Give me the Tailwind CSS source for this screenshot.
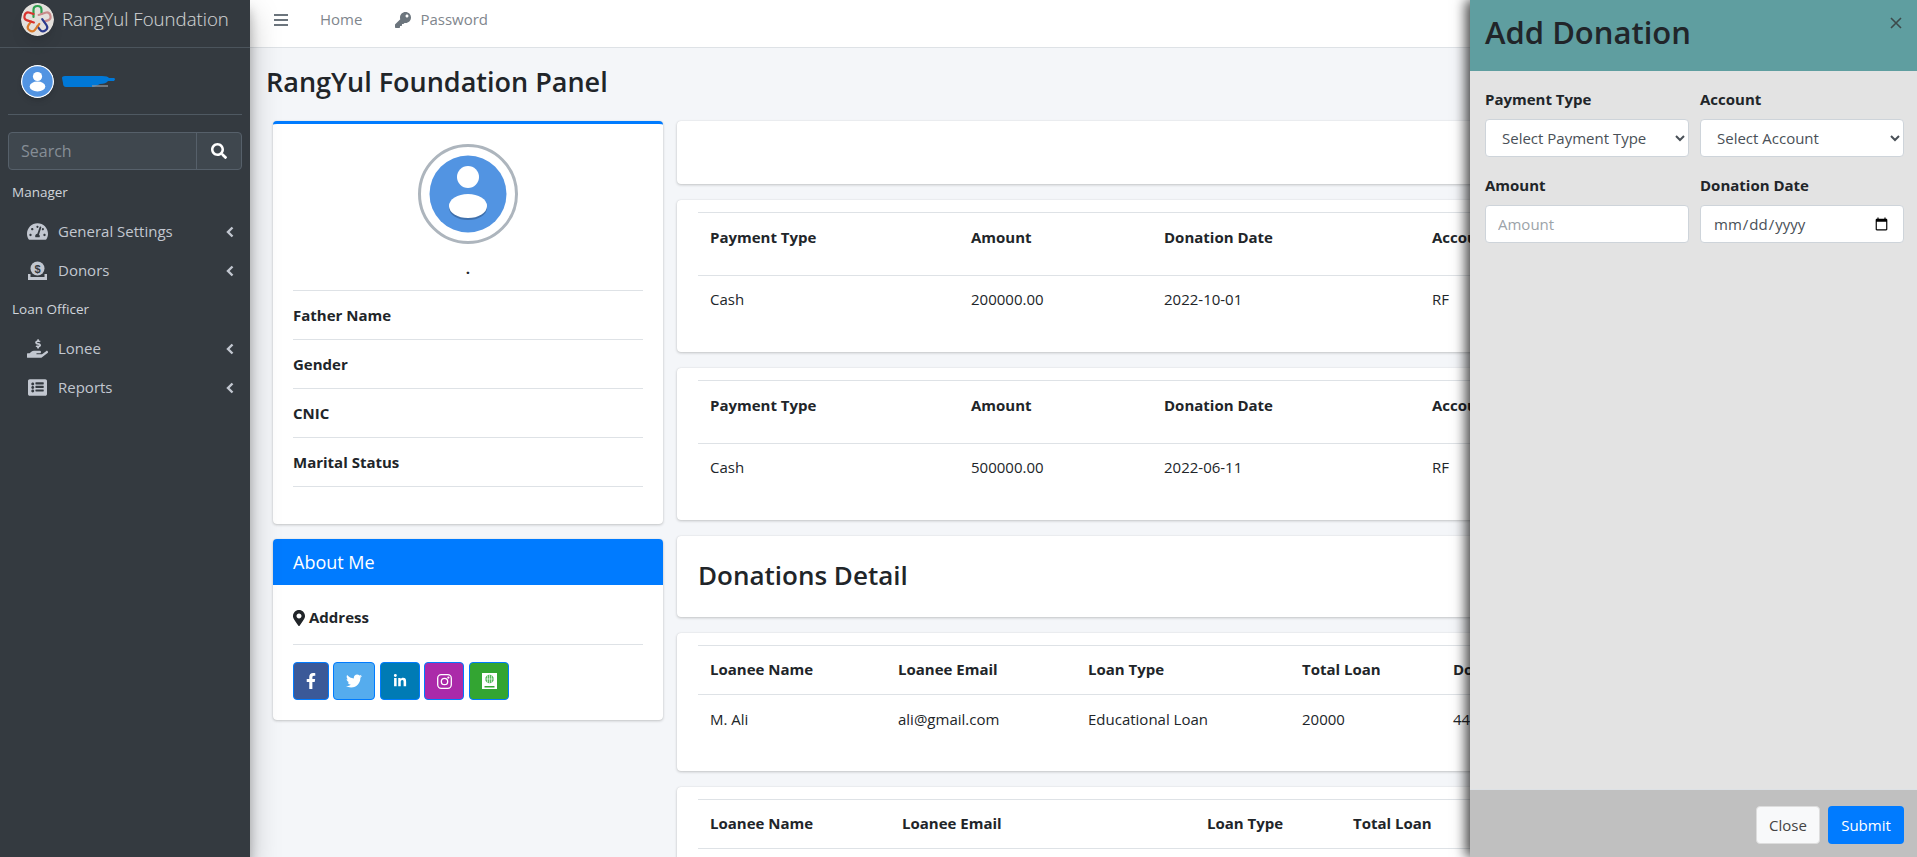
<!DOCTYPE html>
<html lang="en">
<head>
    <meta charset="UTF-8">
    <title>RangYul Foundation Panel</title>
    <script src="https://cdn.jsdelivr.net/npm/@tailwindcss/browser@4"></script>
</head>
<body class="h-screen overflow-hidden bg-[#f4f6f9] text-[#212529] font-['Open_Sans',sans-serif] text-[15px]">
<div class="flex h-full relative">

    <!-- Sidebar -->
    <aside class="w-[250px] h-full flex-shrink-0 bg-[#343a40] text-[#c2c7d0] relative z-10 shadow-[0_14px_28px_rgba(0,0,0,.25),0_10px_10px_rgba(0,0,0,.22)]">
        <div class="h-[48px] flex items-center border-b border-[#4b545c] pl-[21px]">
            <svg class="w-[33px] h-[33px] -mt-[9px] shadow-lg rounded-full" viewBox="0 0 33 33" fill="none" stroke-width="2.2" stroke-linecap="round">
                <circle cx="16.5" cy="16.5" r="16.5" fill="#e4e0dc"/>
                <path d="M12.5 14V7Q12.5 3 16.5 3T20.5 7V11" stroke="#2f9e4f"/>
                <path d="M12.5 14V7Q12.5 3 16.5 3T20.5 7V11" stroke="#c98a8a" transform="rotate(72 16.5 16.5)"/>
                <path d="M12.5 14V7Q12.5 3 16.5 3T20.5 7V11" stroke="#2b3a8c" transform="rotate(144 16.5 16.5)"/>
                <path d="M12.5 14V7Q12.5 3 16.5 3T20.5 7V11" stroke="#d97a2b" transform="rotate(216 16.5 16.5)"/>
                <path d="M12.5 14V7Q12.5 3 16.5 3T20.5 7V11" stroke="#d8332e" transform="rotate(288 16.5 16.5)"/>
            </svg>
            <span class="ml-[8px] -mt-[9px] text-[18.6px] font-light text-white/80 leading-none">RangYul Foundation</span>
        </div>
        <div class="h-[67px] mx-[8px] flex items-center pl-[13px] border-b border-[#4f5962] relative">
            <svg class="w-[33px] h-[33px] rounded-full shadow-md" viewBox="0 0 33 33">
                <circle cx="16.5" cy="16.5" r="16" fill="#5294e2" stroke="#fff" stroke-width="1.5"/>
                <circle cx="16.5" cy="11.5" r="4.6" fill="#fff"/>
                <ellipse cx="16.5" cy="21.5" rx="7.8" ry="5" fill="#fff"/>
            </svg>
            <svg class="ml-[8px] w-[54px] h-[13px]" viewBox="0 0 54 13">
                <path d="M0 3Q0 1 3 1H40Q46 1 47 3H52Q54 4 52 6H46Q44 9 38 9L32 12H4Q1 12 1 8Z" fill="#0078d7"/>
                <path d="M30 10H46V12H30Z" fill="#8a929a" opacity=".7"/>
            </svg>
        </div>
        <div class="mx-[8px] mt-[17px] h-[38px] flex rounded-[4px] border border-[#56606a] bg-[#3f474e]">
            <div class="flex-1 flex items-center pl-[12px] text-[16px] text-[#868e96]">Search</div>
            <div class="w-[45px] flex items-center justify-center border-l border-[#56606a]">
                <svg class="w-[16px] h-[16px]" viewBox="0 0 512 512" fill="#fff"><path d="M505 442.7L405.3 343c-4.5-4.5-10.6-7-17-7H372c27.6-35.3 44-79.7 44-128C416 93.1 322.9 0 208 0S0 93.1 0 208s93.1 208 208 208c48.3 0 92.7-16.4 128-44v16.3c0 6.4 2.5 12.5 7 17l99.7 99.7c9.4 9.4 24.6 9.4 33.9 0l28.3-28.3c9.4-9.4 9.4-24.6.1-34zM208 336c-70.7 0-128-57.2-128-128 0-70.7 57.2-128 128-128 70.7 0 128 57.2 128 128 0 70.7-57.2 128-128 128z"/></svg>
            </div>
        </div>
        <div class="pl-[12px] mt-[12px] h-[20px] leading-[20px] text-[13.5px] text-[#d0d4db]">Manager</div>
        <div class="h-[39px] mt-[10px] flex items-center pl-[27px] pr-[16px] text-[15px]">
            <svg class="w-[21px] h-[19px] flex-shrink-0" viewBox="0 0 576 512" fill="#c2c7d0"><path d="M288 32C128.94 32 0 160.94 0 320c0 52.8 14.25 102.26 39.06 144.8 5.61 9.62 16.3 15.2 27.44 15.2h443c11.14 0 21.83-5.58 27.44-15.2C561.75 422.26 576 372.8 576 320c0-159.06-128.94-288-288-288zm0 64c14.71 0 26.58 10.13 30.32 23.65-1.11 2.26-2.64 4.23-3.45 6.67l-9.22 27.67c-5.13 3.49-10.97 6.01-17.64 6.01-17.67 0-32-14.33-32-32S270.33 96 288 96zM96 384c-17.67 0-32-14.33-32-32s14.33-32 32-32 32 14.33 32 32-14.33 32-32 32zm48-160c-17.67 0-32-14.33-32-32s14.33-32 32-32 32 14.33 32 32-14.33 32-32 32zm246.77-72.41l-61.33 184C343.13 347.33 352 364.54 352 384c0 11.72-3.38 22.55-8.88 32H232.88c-5.5-9.45-8.88-20.28-8.88-32 0-33.94 26.5-61.43 59.9-63.59l61.34-184.01c4.17-12.56 17.73-19.45 30.36-15.17 12.57 4.19 19.35 17.79 15.17 30.36zm14.66 57.2l15.52-46.55c3.47-1.29 7.13-2.23 11.05-2.23 17.67 0 32 14.33 32 32s-14.33 32-32 32c-11.38-.01-20.89-6.28-26.57-15.22zM480 384c-17.67 0-32-14.33-32-32s14.33-32 32-32 32 14.33 32 32-14.33 32-32 32z"/></svg>
            <span class="ml-[10px] flex-1">General Settings</span>
            <svg class="w-[8px] h-[12px]" viewBox="0 0 8 12" fill="none" stroke="#c2c7d0" stroke-width="2.4"><path d="M6.5 1.5L2 6l4.5 4.5"/></svg>
        </div>
        <div class="h-[39px] flex items-center pl-[28px] pr-[16px] text-[15px]">
            <svg class="w-[19px] h-[19px] flex-shrink-0" viewBox="0 0 19 19"><circle cx="9.5" cy="7.5" r="7" fill="#c2c7d0"/><text x="9.5" y="11.5" text-anchor="middle" font-size="11" font-weight="700" font-family="Liberation Sans" fill="#343a40">$</text><path d="M0 13h2.5v3h14v-3H19v6H0z" fill="#c2c7d0"/></svg>
            <span class="ml-[11px] flex-1">Donors</span>
            <svg class="w-[8px] h-[12px]" viewBox="0 0 8 12" fill="none" stroke="#c2c7d0" stroke-width="2.4"><path d="M6.5 1.5L2 6l4.5 4.5"/></svg>
        </div>
        <div class="pl-[12px] mt-[9px] h-[20px] leading-[20px] text-[13.5px] text-[#d0d4db]">Loan Officer</div>
        <div class="h-[39px] mt-[10px] flex items-center pl-[27px] pr-[16px] text-[15px]">
            <svg class="w-[21px] h-[19px] flex-shrink-0" viewBox="0 0 576 512" fill="#c2c7d0"><path d="M271.06,144.3l54.27,14.3a8.59,8.59,0,0,1,6.63,8.1c0,4.6-4.09,8.4-9.12,8.4h-35.6a30,30,0,0,1-11.19-2.2c-5.24-2.2-11.28-1.7-15.3,2l-19,17.5a11.68,11.68,0,0,0-2.25,2.66,11.42,11.42,0,0,0,3.88,15.74,83.77,83.77,0,0,0,34.51,11.5V240c0,8.8,7.83,16,17.37,16h17.37c9.55,0,17.38-7.2,17.38-16V222.4c32.93-3.6,57.84-31,53.5-63-3.15-23-22.46-41.3-46.56-47.7L282.68,97.4a8.59,8.59,0,0,1-6.63-8.1c0-4.6,4.09-8.4,9.12-8.4h35.6A30,30,0,0,1,332,83.1c5.23,2.2,11.28,1.7,15.3-2l19-17.5A11.31,11.31,0,0,0,368.47,61a11.43,11.43,0,0,0-3.84-15.78,83.82,83.82,0,0,0-34.52-11.5V16c0-8.8-7.82-16-17.37-16H295.37C285.82,0,278,7.2,278,16V33.6c-32.89,3.6-57.85,31-53.51,63C227.63,119.6,247,137.9,271.06,144.3ZM565.27,328.1c-11.8-10.7-30.2-10-42.6,0L430.27,402a63.64,63.64,0,0,1-40,14H272a16,16,0,0,1,0-32h78.29c15.9,0,30.71-10.9,33.25-26.6a31.2,31.2,0,0,0,.46-5.46A32,32,0,0,0,352,320H192a117.66,117.66,0,0,0-74.1,26.29L71.4,384H16A16,16,0,0,0,0,400v96a16,16,0,0,0,16,16H372.77a64,64,0,0,0,40-14L564,377a32,32,0,0,0,1.28-48.9Z"/></svg>
            <span class="ml-[10px] flex-1">Lonee</span>
            <svg class="w-[8px] h-[12px]" viewBox="0 0 8 12" fill="none" stroke="#c2c7d0" stroke-width="2.4"><path d="M6.5 1.5L2 6l4.5 4.5"/></svg>
        </div>
        <div class="h-[39px] flex items-center pl-[28px] pr-[16px] text-[15px]">
            <svg class="w-[19px] h-[19px] flex-shrink-0" viewBox="0 0 512 512" fill="#c2c7d0"><path d="M464 480H48c-26.51 0-48-21.49-48-48V80c0-26.51 21.49-48 48-48h416c26.51 0 48 21.49 48 48v352c0 26.51-21.49 48-48 48zM128 120c-22.091 0-40 17.909-40 40s17.909 40 40 40 40-17.909 40-40-17.909-40-40-40zm0 96c-22.091 0-40 17.909-40 40s17.909 40 40 40 40-17.909 40-40-17.909-40-40-40zm0 96c-22.091 0-40 17.909-40 40s17.909 40 40 40 40-17.909 40-40-17.909-40-40-40zm296-152v-32c0-6.627-5.373-12-12-12H212c-6.627 0-12 5.373-12 12v32c0 6.627 5.373 12 12 12h200c6.627 0 12-5.373 12-12zm0 96v-32c0-6.627-5.373-12-12-12H212c-6.627 0-12 5.373-12 12v32c0 6.627 5.373 12 12 12h200c6.627 0 12-5.373 12-12zm0 96v-32c0-6.627-5.373-12-12-12H212c-6.627 0-12 5.373-12 12v32c0 6.627 5.373 12 12 12h200c6.627 0 12-5.373 12-12z"/></svg>
            <span class="ml-[11px] flex-1">Reports</span>
            <svg class="w-[8px] h-[12px]" viewBox="0 0 8 12" fill="none" stroke="#c2c7d0" stroke-width="2.4"><path d="M6.5 1.5L2 6l4.5 4.5"/></svg>
        </div>
    </aside>

    <!-- Main -->
    <div class="flex-1 min-w-0 h-full overflow-hidden">
        <nav class="h-[48px] bg-white border-b border-[#dee2e6] flex items-center text-[15px] text-[#7f868d]">
            <div class="ml-[24px] -mt-[8px] flex flex-col gap-[3px] w-[14px]">
                <span class="h-[2px] bg-[#6c757d]"></span><span class="h-[2px] bg-[#6c757d]"></span><span class="h-[2px] bg-[#6c757d]"></span>
            </div>
            <span class="ml-[32px] -mt-[8px]">Home</span>
            <svg class="ml-[33px] -mt-[8px] w-[16px] h-[16px]" viewBox="0 0 512 512" fill="#6c757d"><path d="M512 176.001C512 273.203 433.202 352 336 352c-11.22 0-22.19-1.062-32.827-3.069l-24.012 27.014A23.999 23.999 0 0 1 261.223 384H224v40c0 13.255-10.745 24-24 24h-40v40c0 13.255-10.745 24-24 24H24c-13.255 0-24-10.745-24-24v-78.059c0-6.365 2.529-12.47 7.029-16.971l161.802-161.802C163.108 213.814 160 195.271 160 176 160 78.798 238.797.001 335.999 0 433.488-.001 512 78.511 512 176.001zM336 128c0 26.51 21.49 48 48 48s48-21.49 48-48-21.49-48-48-48-48 21.49-48 48z"/></svg>
            <span class="ml-[9px] -mt-[8px]">Password</span>
        </nav>

        <div class="h-[73px] pl-[16px] flex items-center">
            <h1 class="text-[27px] font-semibold leading-none -mt-[7px]">RangYul Foundation Panel</h1>
        </div>

        <div class="flex pl-[23px] pr-[12px] gap-[14px] items-start">
            <!-- Left column -->
            <div class="w-[390px] flex-shrink-0">
                <div class="h-[403px] bg-white rounded-[4px] border-t-[3px] border-[#007bff] shadow-[0_0_1px_rgba(0,0,0,.125),0_1px_3px_rgba(0,0,0,.2)] px-[20px] mb-[15px]">
                    <div class="pt-[20px] flex justify-center">
                        <div class="w-[100px] h-[100px] rounded-full border-[3px] border-[#adb5bd] p-[8px]">
                            <svg class="w-full h-full" viewBox="0 0 78 78">
                                <circle cx="39" cy="39" r="38.5" fill="#5294e2"/>
                                <circle cx="39" cy="22" r="11" fill="#fff"/>
                                <ellipse cx="39" cy="53" rx="19" ry="12" fill="#3f70ac"/>
                                <ellipse cx="39" cy="51" rx="19" ry="12" fill="#fff"/>
                            </svg>
                        </div>
                    </div>
                    <div class="text-center font-bold leading-[24px] mt-[12px] h-[24px]">.</div>
                    <div class="mt-[10px] border-t border-[#dee2e6]">
                        <div class="h-[49px] border-b border-[#dee2e6] flex items-center font-bold text-[#212529]">Father Name</div>
                        <div class="h-[49px] border-b border-[#dee2e6] flex items-center font-bold text-[#212529]">Gender</div>
                        <div class="h-[49px] border-b border-[#dee2e6] flex items-center font-bold text-[#212529]">CNIC</div>
                        <div class="h-[49px] border-b border-[#dee2e6] flex items-center font-bold text-[#212529]">Marital Status</div>
                    </div>
                </div>
                <div class="h-[181px] bg-white rounded-[4px] shadow-[0_0_1px_rgba(0,0,0,.125),0_1px_3px_rgba(0,0,0,.2)] overflow-hidden">
                    <div class="h-[46px] bg-[#007bff] text-white text-[18px] px-[20px] flex items-center">About Me</div>
                    <div class="px-[20px]">
                        <div class="h-[60px] pt-[6px] flex items-center border-b border-[#dee2e6] font-bold">
                            <svg class="w-[12px] h-[16px] mr-[4px]" viewBox="0 0 384 512" fill="#212529"><path d="M172.268 501.67C26.97 291.031 0 260.485 0 192 0 85.961 85.961 0 192 0s192 85.961 192 192c0 68.485-26.97 99.031-172.268 309.67-9.535 13.774-29.93 13.773-39.464 0zM192 272c44.183 0 80-35.817 80-80s-35.817-80-80-80-80 35.817-80 80 35.817 80 80 80z"/></svg>
                            Address
                        </div>
                        <div class="mt-[17px] flex">
                            <div class="w-[36px] h-[38px] rounded-[4px] border border-[#007bff] bg-[#3b5998] flex items-center justify-center">
                                <svg class="w-[10px] h-[16px]" viewBox="0 0 320 512" fill="#fff"><path d="M279.14 288l14.22-92.66h-88.91v-60.13c0-25.35 12.42-50.06 52.24-50.06h40.42V6.26S260.43 0 225.36 0c-73.22 0-121.08 44.38-121.08 124.72v70.62H22.89V288h81.39v224h100.17V288z"/></svg>
                            </div>
                            <div class="ml-[4px] w-[42px] h-[38px] rounded-[4px] border border-[#007bff] bg-[#55acee] flex items-center justify-center">
                                <svg class="w-[16px] h-[16px]" viewBox="0 0 512 512" fill="#fff"><path d="M459.37 151.716c.325 4.548.325 9.097.325 13.645 0 138.72-105.583 298.558-298.558 298.558-59.452 0-114.68-17.219-161.137-47.106 8.447.974 16.568 1.299 25.34 1.299 49.055 0 94.213-16.568 130.274-44.832-46.132-.975-84.792-31.188-98.112-72.772 6.498.974 12.995 1.624 19.818 1.624 9.421 0 18.843-1.3 27.614-3.573-48.081-9.747-84.143-51.98-84.143-102.985v-1.299c13.969 7.797 30.214 12.67 47.431 13.319-28.264-18.843-46.781-51.005-46.781-87.391 0-19.492 5.197-37.36 14.294-52.954 51.655 63.675 129.3 105.258 216.365 109.807-1.624-7.797-2.599-15.918-2.599-24.04 0-57.828 46.782-104.934 104.934-104.934 30.213 0 57.502 12.67 76.67 33.137 23.715-4.548 46.456-13.32 66.599-25.34-7.798 24.366-24.366 44.833-46.132 57.827 21.117-2.273 41.584-8.122 60.426-16.243-14.292 20.791-32.161 39.308-52.628 54.253z"/></svg>
                            </div>
                            <div class="ml-[5px] w-[40px] h-[38px] rounded-[4px] border border-[#007bff] bg-[#007bb5] flex items-center justify-center">
                                <svg class="w-[14px] h-[14px]" viewBox="0 0 448 512" fill="#fff"><path d="M100.28 448H7.4V148.9h92.88zM53.79 108.1C24.09 108.1 0 83.5 0 53.8a53.79 53.79 0 0 1 107.58 0c0 29.7-24.1 54.3-53.79 54.3zM447.9 448h-92.68V302.4c0-34.7-.7-79.2-48.29-79.2-48.29 0-55.69 37.7-55.69 76.7V448h-92.78V148.9h89.08v40.8h1.3c12.4-23.5 42.69-48.3 87.88-48.3 94 0 111.28 61.9 111.28 142.3V448z"/></svg>
                            </div>
                            <div class="ml-[4px] w-[40px] h-[38px] rounded-[4px] border border-[#007bff] bg-[#ab2aa9] flex items-center justify-center">
                                <svg class="w-[15px] h-[15px]" viewBox="0 0 15 15" fill="none" stroke="#fff" stroke-width="1.3"><rect x=".7" y=".7" width="13.6" height="13.6" rx="3.5"/><circle cx="7.5" cy="7.5" r="3.2"/><circle cx="11.4" cy="3.6" r=".5" fill="#fff"/></svg>
                            </div>
                            <div class="ml-[5px] w-[40px] h-[38px] rounded-[4px] border border-[#007bff] bg-[#33a532] flex items-center justify-center">
                                <svg class="w-[15px] h-[16px]" viewBox="0 0 15 16"><path d="M0 0h15v16H0z" fill="#fff"/><circle cx="7.5" cy="6" r="4.3" fill="#55b85a"/><path d="M7.5 1.7v8.6M3.2 6h8.6M5.5 2.4v7.2M9.5 2.4v7.2" stroke="#fff" stroke-width=".6"/><path d="M2.5 13h10v1.5h-10z" fill="#33a532"/></svg>
                            </div>
                        </div>
                    </div>
                </div>
            </div>

            <!-- Right column -->
            <div class="flex-1 min-w-0">
                <div class="h-[63px] bg-white rounded-[4px] shadow-[0_0_1px_rgba(0,0,0,.125),0_1px_3px_rgba(0,0,0,.2)] mb-[16px]"></div>

                <div class="h-[152px] bg-white rounded-[4px] shadow-[0_0_1px_rgba(0,0,0,.125),0_1px_3px_rgba(0,0,0,.2)] mb-[16px] px-[21px] pt-[12px]">
                    <table class="w-full table-fixed border-t border-[#dee2e6] text-left">
                        <thead><tr class="border-b border-[#dee2e6]">
                            <th class="w-[261px] h-[63px] align-top pt-[13px] px-[12px] font-bold">Payment Type</th>
                            <th class="w-[193px] align-top pt-[13px] px-[12px] font-bold">Amount</th>
                            <th class="w-[268px] align-top pt-[13px] px-[12px] font-bold">Donation Date</th>
                            <th class="align-top pt-[13px] px-[12px] font-bold">Account</th>
                        </tr></thead>
                        <tbody><tr>
                            <td class="pt-[12px] px-[12px]">Cash</td>
                            <td class="pt-[12px] px-[12px]">200000.00</td>
                            <td class="pt-[12px] px-[12px]">2022-10-01</td>
                            <td class="pt-[12px] px-[12px]">RF</td>
                        </tr></tbody>
                    </table>
                </div>

                <div class="h-[152px] bg-white rounded-[4px] shadow-[0_0_1px_rgba(0,0,0,.125),0_1px_3px_rgba(0,0,0,.2)] mb-[16px] px-[21px] pt-[12px]">
                    <table class="w-full table-fixed border-t border-[#dee2e6] text-left">
                        <thead><tr class="border-b border-[#dee2e6]">
                            <th class="w-[261px] h-[63px] align-top pt-[13px] px-[12px] font-bold">Payment Type</th>
                            <th class="w-[193px] align-top pt-[13px] px-[12px] font-bold">Amount</th>
                            <th class="w-[268px] align-top pt-[13px] px-[12px] font-bold">Donation Date</th>
                            <th class="align-top pt-[13px] px-[12px] font-bold">Account</th>
                        </tr></thead>
                        <tbody><tr>
                            <td class="pt-[12px] px-[12px]">Cash</td>
                            <td class="pt-[12px] px-[12px]">500000.00</td>
                            <td class="pt-[12px] px-[12px]">2022-06-11</td>
                            <td class="pt-[12px] px-[12px]">RF</td>
                        </tr></tbody>
                    </table>
                </div>

                <div class="h-[81px] bg-white rounded-[4px] shadow-[0_0_1px_rgba(0,0,0,.125),0_1px_3px_rgba(0,0,0,.2)] mb-[16px] px-[21px] flex items-center">
                    <h2 class="text-[26px] font-semibold leading-none -mt-[4px]">Donations Detail</h2>
                </div>

                <div class="h-[138px] bg-white rounded-[4px] shadow-[0_0_1px_rgba(0,0,0,.125),0_1px_3px_rgba(0,0,0,.2)] mb-[16px] px-[21px] pt-[12px]">
                    <table class="w-full table-fixed border-t border-[#dee2e6] text-left">
                        <thead><tr class="border-b border-[#dee2e6]">
                            <th class="w-[188px] h-[49px] align-top pt-[12px] px-[12px] font-bold">Loanee Name</th>
                            <th class="w-[190px] align-top pt-[12px] px-[12px] font-bold">Loanee Email</th>
                            <th class="w-[214px] align-top pt-[12px] px-[12px] font-bold">Loan Type</th>
                            <th class="w-[151px] align-top pt-[12px] px-[12px] font-bold">Total Loan</th>
                            <th class="align-top pt-[12px] px-[12px] font-bold">Donation</th>
                        </tr></thead>
                        <tbody><tr>
                            <td class="pt-[13px] px-[12px]">M. Ali</td>
                            <td class="pt-[13px] px-[12px]">ali@gmail.com</td>
                            <td class="pt-[13px] px-[12px]">Educational Loan</td>
                            <td class="pt-[13px] px-[12px]">20000</td>
                            <td class="pt-[13px] px-[12px]">44</td>
                        </tr></tbody>
                    </table>
                </div>

                <div class="h-[138px] bg-white rounded-[4px] shadow-[0_0_1px_rgba(0,0,0,.125),0_1px_3px_rgba(0,0,0,.2)] px-[21px] pt-[12px]">
                    <table class="w-full table-fixed border-t border-[#dee2e6] text-left">
                        <thead><tr class="border-b border-[#dee2e6]">
                            <th class="w-[192px] h-[49px] align-top pt-[12px] px-[12px] font-bold">Loanee Name</th>
                            <th class="w-[305px] align-top pt-[12px] px-[12px] font-bold">Loanee Email</th>
                            <th class="w-[146px] align-top pt-[12px] px-[12px] font-bold">Loan Type</th>
                            <th class="align-top pt-[12px] px-[12px] font-bold">Total Loan</th>
                        </tr></thead>
                    </table>
                </div>
            </div>
        </div>
    </div>

    <!-- Add Donation panel -->
    <div class="absolute top-0 right-0 bottom-0 w-[447px] z-20 flex flex-col bg-[#e3e3e3] shadow-[-4px_0_12px_rgba(0,0,0,.75)]">
        <div class="h-[71px] bg-[#5f9ea0] flex items-start justify-between pl-[15px] pr-[15px]">
            <h3 class="text-[31px] font-semibold leading-none text-[#212529] mt-[17px]">Add Donation</h3>
            <svg class="w-[12px] h-[12px] mt-[17px]" viewBox="0 0 12 12" stroke="#3d4a4b" stroke-width="1.6"><path d="M1 1l10 10M11 1L1 11"/></svg>
        </div>
        <div class="flex-1 pl-[15px] pr-[13px] pt-[16px]">
            <div class="grid grid-cols-[204px_204px] gap-x-[11px]">
                <div>
                    <label class="block font-bold leading-[24px] mb-[8px] text-[#212529]">Payment Type</label>
                    <select class="w-full h-[38px] bg-white rounded-[4px] border border-[#ced4da] pl-[12px] text-[#495057] text-[15px]"><option>Select Payment Type</option></select>
                </div>
                <div>
                    <label class="block font-bold leading-[24px] mb-[8px] text-[#212529]">Account</label>
                    <select class="w-full h-[38px] bg-white rounded-[4px] border border-[#ced4da] pl-[12px] text-[#495057] text-[15px]"><option>Select Account</option></select>
                </div>
                <div class="mt-[16px]">
                    <label class="block font-bold leading-[24px] mb-[8px] text-[#212529]">Amount</label>
                    <input type="text" placeholder="Amount" class="w-full h-[38px] bg-white rounded-[4px] border border-[#ced4da] px-[12px] text-[15px] placeholder:text-[#9ca3a9]">
                </div>
                <div class="mt-[16px]">
                    <label class="block font-bold leading-[24px] mb-[8px] text-[#212529]">Donation Date</label>
                    <input type="date" class="w-full h-[38px] bg-white rounded-[4px] border border-[#ced4da] px-[12px] text-[#495057] text-[15px]">
                </div>
            </div>
        </div>
        <div class="h-[68px] bg-[#c0c0c0] border-t border-[#dee2e6] flex items-start justify-end gap-[8px] pt-[16px] pr-[13px]">
            <button class="w-[64px] h-[38px] rounded-[4px] bg-[#f8f9fa] border border-[#ddd] text-[#444] text-[15px]">Close</button>
            <button class="w-[76px] h-[38px] rounded-[4px] bg-[#007bff] text-white text-[15px]">Submit</button>
        </div>
    </div>
</div>
</body>
</html>
